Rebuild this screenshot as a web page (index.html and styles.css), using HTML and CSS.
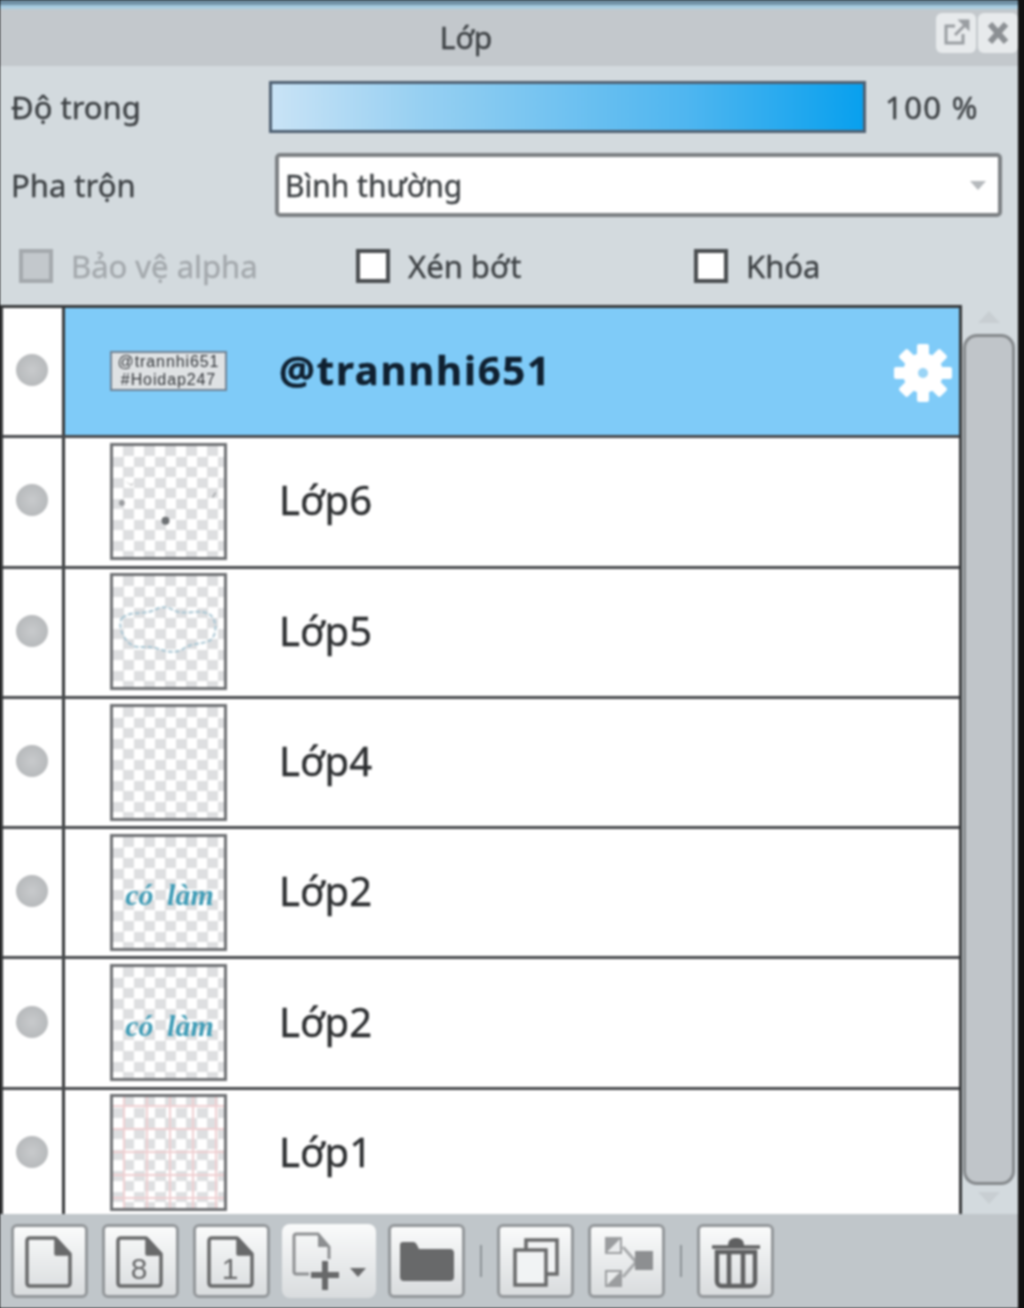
FILE: index.html
```html
<!DOCTYPE html>
<html lang="vi">
<head>
  <meta charset="UTF-8">
  <title>Lớp</title>
  <link rel="stylesheet" href="styles.css">
</head>
<body>
  <div class="panel">

    <!-- title -->
    <div class="topStrip"></div>
    <div class="titleBar">
      <span>Lớp</span>
      <div class="winBtns">
        <div class="winBtn">
          <svg width="30" height="30" viewBox="0 0 30 30" fill="none" stroke="#9a9ea2" stroke-width="3">
            <path d="M14 8H5v17h17v-9"/><path d="M14 17L25 6"/><path d="M20 3h7v7z" fill="#9a9ea2"/>
          </svg>
        </div>
        <div class="winBtn">
          <svg width="30" height="30" viewBox="0 0 30 30" fill="none" stroke="#8c9094" stroke-width="6">
            <path d="M7 6l16 18M23 6L7 24"/>
          </svg>
        </div>
      </div>
    </div>

    <!-- settings -->
    <div class="settings">
      <div class="settingRow">
        <label class="settingLabel">Độ trong</label>
        <div class="opacityBar"></div>
        <span class="opacityValue">100 %</span>
      </div>
      <div class="settingRow blendRow">
        <label class="settingLabel">Pha trộn</label>
        <div class="blendSelect">
          <span>Bình thường</span>
          <i class="selectArrow"></i>
        </div>
      </div>
      <div class="checkRow">
        <div class="check check1 disabled"><i></i><span>Bảo vệ alpha</span></div>
        <div class="check check2"><i></i><span>Xén bớt</span></div>
        <div class="check"><i></i><span>Khóa</span></div>
      </div>
    </div>

    <!-- layers -->
    <div class="layerArea">
      <div class="layerList">
        <div class="layer active">
          <div class="eyeCell"><i></i></div>
          <div class="layerBody">
            <div class="thumb textThumb"><span>@trannhi651</span><span>#Hoidap247</span></div>
            <div class="layerName">@trannhi651</div>
            <svg class="gear" width="60" height="60" viewBox="0 0 60 60">
              <g fill="#fff">
                <rect x="24" y="1" width="12" height="58" rx="2"/>
                <rect x="24" y="1" width="12" height="58" rx="2" transform="rotate(45 30 30)"/>
                <rect x="24" y="1" width="12" height="58" rx="2" transform="rotate(90 30 30)"/>
                <rect x="24" y="1" width="12" height="58" rx="2" transform="rotate(135 30 30)"/>
                <circle cx="30" cy="30" r="20"/>
              </g>
              <circle cx="30" cy="30" r="5" fill="#9ad4f6"/>
            </svg>
          </div>
        </div>
        <div class="layer">
          <div class="eyeCell"><i></i></div>
          <div class="layerBody">
            <div class="thumb">
              <svg width="112" height="112" viewBox="0 0 112 112" fill="#6d7073">
                <circle cx="53" cy="76" r="4"/><circle cx="9" cy="58" r="3" opacity=".6"/>
                <path d="M100 52l3-5 1 1-3 5z" opacity=".6"/><path d="M12 36l6 3 3-2-2 4z" opacity=".4"/>
              </svg>
            </div>
            <div class="layerName">Lớp6</div>
          </div>
        </div>
        <div class="layer">
          <div class="eyeCell"><i></i></div>
          <div class="layerBody">
            <div class="thumb">
              <svg width="112" height="112" viewBox="0 0 112 112" fill="none" stroke="#a9c6d3" stroke-width="2" stroke-dasharray="5 2">
                <path d="M9 42c10-8 22-3 32-8 6-3 12-5 20 0 12 6 24-2 36 4 8 4 9 22 0 27-10 4-18 2-26 8-8 5-18 3-28-1-10-3-20 3-28-6-6-6-10-18-6-24z"/>
              </svg>
            </div>
            <div class="layerName">Lớp5</div>
          </div>
        </div>
        <div class="layer">
          <div class="eyeCell"><i></i></div>
          <div class="layerBody">
            <div class="thumb"></div>
            <div class="layerName">Lớp4</div>
          </div>
        </div>
        <div class="layer">
          <div class="eyeCell"><i></i></div>
          <div class="layerBody">
            <div class="thumb scriptThumb"><span>có làm</span></div>
            <div class="layerName">Lớp2</div>
          </div>
        </div>
        <div class="layer">
          <div class="eyeCell"><i></i></div>
          <div class="layerBody">
            <div class="thumb scriptThumb"><span>có làm</span></div>
            <div class="layerName">Lớp2</div>
          </div>
        </div>
        <div class="layer">
          <div class="eyeCell"><i></i></div>
          <div class="layerBody">
            <div class="thumb gridThumb"></div>
            <div class="layerName">Lớp1</div>
          </div>
        </div>
      </div>

      <div class="scrollBar">
        <i class="scrollUp"></i>
        <div class="scrollThumb"></div>
        <i class="scrollDown"></i>
      </div>
    </div>

    <!-- toolbar -->
    <div class="toolbar">
      <div class="toolBtn">
        <svg width="60" height="60" viewBox="0 0 60 60" fill="none" stroke="#68696a" stroke-width="3.5" stroke-linejoin="round">
          <path d="M10 7h25l15 16v29c0 2-1 3-3 3H10c-2 0-3-1-3-3V10c0-2 1-3 3-3z"/><path d="M36 8l13 15H36z" fill="#68696a"/>
        </svg>
      </div>
      <div class="toolBtn">
        <svg width="60" height="60" viewBox="0 0 60 60" fill="none" stroke="#68696a" stroke-width="3.5" stroke-linejoin="round">
          <path d="M10 7h25l15 16v29c0 2-1 3-3 3H10c-2 0-3-1-3-3V10c0-2 1-3 3-3z"/><path d="M36 8l13 15H36z" fill="#68696a"/>
          <text x="28" y="48" class="pageNum" stroke="none">8</text>
        </svg>
      </div>
      <div class="toolBtn">
        <svg width="60" height="60" viewBox="0 0 60 60" fill="none" stroke="#68696a" stroke-width="3.5" stroke-linejoin="round">
          <path d="M10 7h25l15 16v29c0 2-1 3-3 3H10c-2 0-3-1-3-3V10c0-2 1-3 3-3z"/><path d="M36 8l13 15H36z" fill="#68696a"/>
          <text x="28" y="48" class="pageNum" stroke="none">1</text>
        </svg>
      </div>
      <div class="toolBtn addBtn">
        <svg width="84" height="66" viewBox="0 0 84 66" fill="none">
          <path d="M22 46H9c-1 0-2-1-2-2V8c0-1 1-2 2-2h22l11 13v12" stroke="#8d8f91" stroke-width="3"/>
          <path d="M31 6l11 13H31z" fill="#8d8f91"/>
          <path d="M38 33v29M24 47h28" stroke="#68696a" stroke-width="6"/>
          <path d="M63 40h16l-8 9z" fill="#68696a"/>
        </svg>
      </div>
      <div class="toolBtn folderBtn">
        <svg width="60" height="60" viewBox="0 0 60 60" fill="#68696a">
          <path d="M3 14c0-2 1-3 3-3h10c2 0 3 1 4 3l2 4h31c3 0 4 2 4 4v24c0 3-2 4-4 4H7c-3 0-4-2-4-4z"/>
        </svg>
      </div>
      <i class="toolSep"></i>
      <div class="toolBtn">
        <svg width="60" height="60" viewBox="0 0 60 60" fill="#f1f3f4" stroke="#68696a" stroke-width="3.5">
          <path d="M20 9h31v34H20z"/><path d="M9 19h31v35H9z"/>
        </svg>
      </div>
      <div class="toolBtn mergeBtn">
        <svg width="60" height="60" viewBox="0 0 60 60">
          <path d="M8 6h17v17H8z" fill="#9b9d9f"/><path d="M10 21L23 8v13z" fill="#e9ebec"/>
          <path d="M8 39h17v17H8z" fill="#9b9d9f"/><path d="M10 54l13-13H10z" fill="#e9ebec"/>
          <path d="M26 16l13 15-13 15" fill="none" stroke="#a8aaac" stroke-width="3"/>
          <path d="M38 20h18v19H38z" fill="#8d8f91"/>
        </svg>
      </div>
      <i class="toolSep"></i>
      <div class="toolBtn">
        <svg width="60" height="60" viewBox="0 0 60 60" fill="none" stroke="#5f6061" stroke-width="4.5">
          <path d="M6 16h48" stroke-width="3.5"/><path d="M22 15c0-6 3-8 8-8s8 2 8 8z" fill="#5f6061" stroke="none"/>
          <path d="M11 21h38v29c0 3-2 5-5 5H16c-3 0-5-2-5-5z"/><path d="M23 22v32M37 22v32"/>
        </svg>
      </div>
    </div>

  </div>
</body>
</html>
```

FILE: styles.css
```css
* {
  box-sizing: border-box;
}
html, body {
  margin: 0;
  background: #111;
}
i {
  display: block;
}
.panel {
  width: 1018px;
  height: 1308px;
  overflow: hidden;
  background: #d3dade;
  color: #3d4144;
  font-family: "Noto Sans", sans-serif;
  font-size: 31px;
  filter: blur(0.9px);
  -webkit-text-stroke: 0.4px currentColor;
}

/* title */
.topStrip {
  height: 10px;
  background: linear-gradient(#6f8ea3 0, #6f8ea3 4px, #a9cde2 6px, #a9cde2 8px, #c3c8cc 10px);
}
.titleBar {
  height: 56px;
  background: #c3c8cc;
  display: flex;
  align-items: center;
  justify-content: center;
  padding-right: 86px;
  padding-bottom: 2px;
  position: relative;
  font-size: 30px;
}
.winBtns {
  position: absolute;
  right: 0;
  top: 3px;
  display: flex;
  gap: 2px;
}
.winBtn {
  width: 40px;
  height: 40px;
  background: #e7eaec;
  border-radius: 6px;
  display: flex;
  align-items: center;
  justify-content: center;
}

/* settings */
.settings {
  height: 239px;
  padding: 15px 0 0 11px;
}
.settingRow {
  display: flex;
  align-items: center;
  height: 52px;
}
.settingLabel {
  width: 258px;
}
.opacityBar {
  width: 597px;
  height: 52px;
  border: 3px solid #4f6072;
  background: linear-gradient(90deg, #c9e3f6, #97d0f2 25%, #4fb6f0 70%, #08a0ee);
}
.opacityValue {
  margin-left: 19px;
  letter-spacing: 1.4px;
}
.blendRow {
  margin-top: 20px;
  height: 64px;
}
.blendRow .settingLabel {
  width: 264px;
}
.blendSelect {
  width: 727px;
  height: 64px;
  background: #fff;
  border: 4px solid #7c8083;
  border-radius: 5px;
  display: flex;
  align-items: center;
  justify-content: space-between;
  padding: 0 12px 0 6px;
  font-size: 30px;
}
.selectArrow {
  width: 0;
  height: 0;
  border: 8px solid transparent;
  border-top: 9px solid #b5b9bc;
  border-bottom: 0;
}
.checkRow {
  display: flex;
  margin-top: 31px;
  padding-left: 8px;
}
.check {
  display: flex;
  align-items: center;
  gap: 18px;
  height: 36px;
}
.check1 {
  width: 337px;
}
.check2 {
  width: 338px;
}
.check i {
  width: 34px;
  height: 34px;
  background: #fff;
  border: 4px solid #4a4d50;
}
.check.disabled {
  color: #a4a9ad;
}
.check.disabled i {
  background: #c3c8cc;
  border-color: #a4a9ad;
}

/* layers */
.layerArea {
  display: flex;
  height: 909px;
}
.layerList {
  width: 962px;
  overflow: hidden;
  background: #fff;
  border: 3px solid #37393b;
  border-bottom: 0;
}
.layer {
  display: flex;
  height: 130.3px;
  border-bottom: 3px solid #47494c;
}
.eyeCell {
  width: 62px;
  border-right: 3px solid #37393b;
  display: flex;
  align-items: center;
  justify-content: center;
  padding: 0 2px 3px 0;
}
.eyeCell i {
  width: 32px;
  height: 32px;
  border-radius: 50%;
  background: radial-gradient(#c8cacc, #b0b3b5);
}
.layerBody {
  flex: 1;
  display: flex;
  align-items: center;
  padding-left: 45px;
  font-size: 40px;
  color: #2c2e30;
}
.layer.active .layerBody {
  background: #7fcbf8;
}
.layerName {
  margin-left: 52px;
  padding-bottom: 4px;
}
.layer.active .layerName {
  font-weight: bold;
  color: #0f2030;
  letter-spacing: 1.8px;
}
.gear {
  margin-left: auto;
  margin-right: 6px;
  margin-top: 2px;
}
.thumb {
  width: 117px;
  height: 117px;
  flex: none;
  margin-bottom: 1px;
  border: 3px solid #6f7174;
  background-color: #fff;
  background-image: conic-gradient(#dedfe1 25%, #fff 25% 50%, #dedfe1 50% 75%, #fff 75%);
  background-size: 21px 21px;
  display: flex;
  align-items: center;
  justify-content: center;
  overflow: hidden;
  -webkit-text-stroke: 0;
}
.textThumb {
  height: 40px;
  border-width: 2px;
  flex-direction: column;
  background: #dfe2e4;
  border-color: #6f8294;
  font-size: 16px;
  line-height: 18px;
  letter-spacing: 0.9px;
  color: #33363a;
  font-family: "Liberation Sans", sans-serif;
  white-space: nowrap;
}
.textThumb span {
  display: block;
  height: 18px;
}
.scriptThumb {
  font-family: "Liberation Serif", serif;
  font-style: italic;
  font-weight: bold;
  font-size: 30px;
  color: #3f9cb6;
  word-spacing: 6px;
  white-space: nowrap;
  padding-top: 6px;
  padding-left: 2px;
}
.gridThumb {
  background-image:
    linear-gradient(90deg, #efd0d2 2px, transparent 2px),
    linear-gradient(#efd0d2 2px, transparent 2px),
    conic-gradient(#dedfe1 25%, #fff 25% 50%, #dedfe1 50% 75%, #fff 75%);
  background-size: 23px 23px, 23px 23px, 21px 21px;
  background-position: 10px 8px, 10px 8px, 0 0;
}

.scrollBar {
  width: 52px;
  margin-left: 1px;
  display: flex;
  flex-direction: column;
  align-items: center;
  padding-top: 6px;
}
.scrollUp, .scrollDown {
  width: 0;
  height: 0;
  border: 11px solid transparent;
}
.scrollUp {
  border-top: 0;
  border-bottom: 12px solid #c8ced2;
}
.scrollDown {
  border-bottom: 0;
  border-top: 12px solid #c8ced2;
  margin-top: 7px;
}
.scrollThumb {
  width: 52px;
  height: 851px;
  margin-top: 11px;
  background: #c0c5c9;
  border: 3px solid #85898c;
  border-radius: 14px;
}

/* toolbar */
.toolbar {
  height: 94px;
  background: #c0c6ca;
  display: flex;
  align-items: center;
  padding: 0 0 0 11px;
}
.toolBtn {
  width: 77px;
  height: 74px;
  margin-right: 14px;
  background: linear-gradient(#fafbfb, #d9dcde);
  border: 3px solid #93979a;
  border-radius: 6px;
  display: flex;
  align-items: center;
  justify-content: center;
}
.addBtn {
  width: 94px;
  margin-left: -2px;
  margin-right: 12px;
  border: 0;
  border-radius: 8px;
}
.folderBtn {
  margin-right: 0;
}
.mergeBtn {
  margin-right: 0;
}
.toolSep {
  width: 2px;
  height: 32px;
  margin: 0 15px;
  background: #8c9296;
}
.pageNum {
  font-family: "Liberation Sans", sans-serif;
  font-size: 30px;
  fill: #68696a;
  text-anchor: middle;
}
```
